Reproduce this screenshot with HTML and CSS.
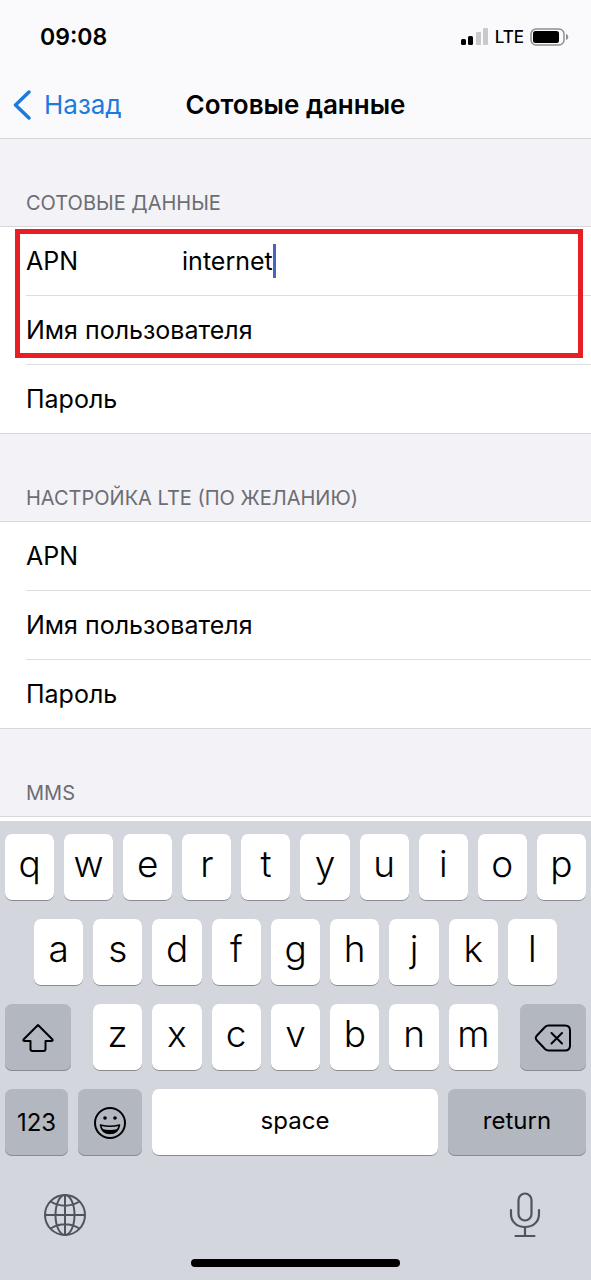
FILE: index.html
```html
<!DOCTYPE html>
<html lang="ru">
<head>
<meta charset="utf-8">
<meta name="viewport" content="width=device-width, initial-scale=1">
<title>Сотовые данные</title>
<link rel="stylesheet" href="styles.css">
</head>
<body>
<div class="screen">
  <header class="header">
    <div class="status">
      <time class="clock">09:08</time>
      <div class="indicators">
        <svg class="signal" width="28" height="18" viewBox="0 0 28 18" aria-hidden="true">
          <rect x="0" y="11" width="5" height="6" rx="1.5"/>
          <rect x="7" y="8" width="5" height="9" rx="1.5"/>
          <rect class="faint" x="15" y="4" width="5" height="13" rx="1"/>
          <rect class="faint" x="22" y="0" width="5" height="17" rx="1"/>
        </svg>
        <span class="network">LTE</span>
        <svg width="39" height="18" viewBox="0 0 39 18" aria-hidden="true">
          <rect x="1" y="1" width="33" height="16" rx="5" fill="none" stroke="#8f8f91" stroke-width="1.5"/>
          <rect x="3" y="3" width="26" height="12" rx="2.5"/>
          <path d="M36 6c3 1 3 5 0 6z" fill="#8f8f91"/>
        </svg>
      </div>
    </div>
    <nav class="nav">
      <a class="back" href="#">
        <svg width="20" height="30" viewBox="0 0 20 30" aria-hidden="true"><path d="M17 2L3.500 15L17 28" fill="none" stroke="currentColor" stroke-width="3.500" stroke-linecap="round" stroke-linejoin="round"/></svg>
        <span>Назад</span>
      </a>
      <h1 class="title">Сотовые данные</h1>
    </nav>
  </header>

  <main class="settings">
    <section>
      <h2 class="section-title">СОТОВЫЕ ДАННЫЕ</h2>
      <div class="group">
        <div class="row">
          <label for="apn">APN</label>
          <div class="field"><input id="apn" class="filled" type="text" value="internet"><span class="caret"></span></div>
        </div>
        <div class="row"><label for="user">Имя пользователя</label><input id="user" type="text"></div>
        <div class="row"><label for="pass">Пароль</label><input id="pass" type="password"></div>
        <div class="highlight"></div>
      </div>
    </section>
    <section>
      <h2 class="section-title">НАСТРОЙКА LTE (ПО ЖЕЛАНИЮ)</h2>
      <div class="group">
        <div class="row"><label for="lte-apn">APN</label><input id="lte-apn" type="text"></div>
        <div class="row"><label for="lte-user">Имя пользователя</label><input id="lte-user" type="text"></div>
        <div class="row"><label for="lte-pass">Пароль</label><input id="lte-pass" type="password"></div>
      </div>
    </section>
    <section>
      <h2 class="section-title">MMS</h2>
      <div class="group group-cut"></div>
    </section>
  </main>

  <div class="keyboard">
    <div class="keys">
      <button class="key">q</button><button class="key">w</button><button class="key">e</button><button class="key">r</button><button class="key">t</button><button class="key">y</button><button class="key">u</button><button class="key">i</button><button class="key">o</button><button class="key">p</button>
    </div>
    <div class="keys keys-inset">
      <button class="key">a</button><button class="key">s</button><button class="key">d</button><button class="key">f</button><button class="key">g</button><button class="key">h</button><button class="key">j</button><button class="key">k</button><button class="key">l</button>
    </div>
    <div class="keys">
      <button class="key dark shift" aria-label="Shift">
        <svg width="32" height="30" viewBox="0 0 32 30" aria-hidden="true"><path d="M16 2L30.500 16.500Q31 18 29.500 18H23.500V26Q23.500 28 21.500 28H10.500Q8.500 28 8.500 26V18H2.500Q1 18 1.500 16.500Z" fill="none" stroke="currentColor" stroke-width="2" stroke-linejoin="round"/></svg>
      </button>
      <button class="key">z</button><button class="key">x</button><button class="key">c</button><button class="key">v</button><button class="key">b</button><button class="key">n</button><button class="key">m</button>
      <button class="key dark delete" aria-label="Delete">
        <svg width="38" height="28" viewBox="0 0 38 28" aria-hidden="true"><g fill="none" stroke="currentColor" stroke-width="2" stroke-linecap="round" stroke-linejoin="round"><path d="M14.500 1.500H31Q36 1.500 36 6.500V21.500Q36 26.500 31 26.500H14.500Q12.500 26.500 11 25L2.500 16Q1 14 2.500 12L11 3Q12.500 1.500 14.500 1.500Z"/><path d="M17.500 9L28 19.500M28 9L17.500 19.500"/></g></svg>
      </button>
    </div>
    <div class="keys">
      <button class="key dark word numbers">123</button>
      <button class="key dark emoji" aria-label="Emoji">
        <svg width="34" height="34" viewBox="0 0 34 34" aria-hidden="true"><circle cx="17" cy="17" r="15" fill="none" stroke="currentColor" stroke-width="2"/><circle cx="12" cy="12" r="1.800"/><circle cx="22" cy="12" r="1.800"/><path d="M7.500 19Q17 21.500 26.500 19Q25 27.500 17 27.500Q9 27.500 7.500 19Z" fill="none" stroke="currentColor" stroke-width="1.600" stroke-linejoin="round"/><path d="M9 23Q17 25 25 23Q22.500 27.500 17 27.500Q11.500 27.500 9 23Z"/></svg>
      </button>
      <button class="key word">space</button>
      <button class="key dark word return">return</button>
    </div>
    <div class="tools">
      <button class="tool" aria-label="Globe">
        <svg width="44" height="44" viewBox="0 0 44 44" aria-hidden="true"><g fill="none" stroke="currentColor" stroke-width="2"><circle cx="22" cy="22" r="20"/><ellipse cx="22" cy="22" rx="9.500" ry="20"/><path d="M22 2V42M2 22H42M7.500 8.500Q22 17 36.500 8.500M7.500 35.500Q22 27 36.500 35.500"/></g></svg>
      </button>
      <button class="tool" aria-label="Dictate">
        <svg width="32" height="46" viewBox="0 0 32 46" aria-hidden="true"><g fill="none" stroke="currentColor" stroke-width="2.200" stroke-linecap="round"><rect x="9.500" y="1.500" width="13" height="27" rx="6.500"/><path d="M2 18V22C2 30 8 35 16 35S30 30 30 22V18M16 35V44M6.500 44H25.500"/></g></svg>
      </button>
    </div>
    <div class="home"></div>
  </div>
</div>
</body>
</html>
```
FILE: styles.css
```css
* {
  box-sizing: border-box;
}

body {
  margin: 0;
  background: #f2f2f7;
  color: #000;
  font-family: Inter, "Noto Sans", sans-serif;
}

button,
input {
  margin: 0;
  padding: 0;
  border: 0;
  color: inherit;
  font: inherit;
}

svg {
  display: block;
  flex: none;
}

.screen {
  display: flex;
  flex-direction: column;
  min-height: 100vh;
}

.header {
  border-bottom: 1px solid #d5d5d9;
  background: #fafafc;
}

.status {
  display: flex;
  align-items: center;
  justify-content: space-between;
  height: 74px;
  padding: 0 22px 0 40px;
}

.clock {
  font-size: 23px;
  font-weight: 600;
}

.indicators {
  display: flex;
  align-items: center;
  gap: 6px;
}

.faint {
  fill: #c9c9cb;
}

.network {
  font-size: 17px;
  font-weight: 500;
}

.nav {
  display: grid;
  grid-template-columns: 1fr auto 1fr;
  align-items: center;
  height: 64px;
  padding: 0 12px 3px;
}

.back {
  display: flex;
  align-items: center;
  gap: 12px;
  color: #1b7bde;
  font-size: 26px;
  text-decoration: none;
}

.title {
  margin: 0;
  font-size: 26px;
  font-weight: 600;
}

.settings {
  flex: 1;
}

.section-title {
  margin: 0;
  padding: 52px 26px 11px;
  color: #6d6d72;
  font-size: 20px;
  font-weight: 400;
  line-height: 24px;
}

.group {
  position: relative;
  border-top: 1px solid #d8d8dc;
  border-bottom: 1px solid #d8d8dc;
  background: #fff;
}

.group-cut {
  height: 5px;
  border-bottom: 0;
}

.row {
  display: flex;
  align-items: center;
  height: 69px;
  margin-left: 26px;
  border-bottom: 1px solid #dedee1;
  font-size: 25px;
}

.row:nth-child(3) {
  height: 68px;
  border-bottom: 0;
}

.row > input {
  flex: 1;
  min-width: 0;
  background: transparent;
  outline: 0;
}

.field {
  display: flex;
  align-items: center;
  margin-left: 104px;
}

.filled {
  field-sizing: content;
  background: transparent;
  outline: 0;
}

.caret {
  width: 3px;
  height: 34px;
  background: #4763c4;
}

.highlight {
  position: absolute;
  inset: 2px 8px 75px 15px;
  border: 5px solid #e81e25;
  pointer-events: none;
}

.keyboard {
  display: flex;
  flex-direction: column;
  gap: 18px;
  padding: 13px 5px;
  background: #d3d6dc;
}

.keys {
  display: flex;
  gap: 10px;
}

.keys-inset {
  padding: 0 5%;
}

.key {
  display: flex;
  flex: 1;
  align-items: center;
  justify-content: center;
  min-width: 0;
  height: 67px;
  padding-bottom: 8px;
  border-radius: 7px;
  background: #fff;
  box-shadow: inset 0 -1px #898b8f;
  font-size: 37px;
  font-weight: 300;
}

.dark {
  padding-bottom: 0;
  background: #b2b7c0;
}

.word {
  padding-bottom: 4px;
  font-size: 24px;
  font-weight: 400;
}

.shift {
  flex: 0 0 66px;
  margin-right: 12px;
}

.delete {
  flex: 0 0 66px;
  margin-left: 12px;
}

.numbers {
  flex: 0 0 63px;
  padding-bottom: 0;
}

.emoji {
  flex: 0 0 64px;
}

.return {
  flex: 0 0 138px;
}

.tools {
  display: flex;
  align-items: center;
  justify-content: space-between;
  padding: 18px 45px 3px 38px;
}

.tool {
  background: transparent;
  color: #50545d;
}

.home {
  align-self: center;
  width: 36%;
  height: 8px;
  border-radius: 4px;
  background: #000;
}
```
